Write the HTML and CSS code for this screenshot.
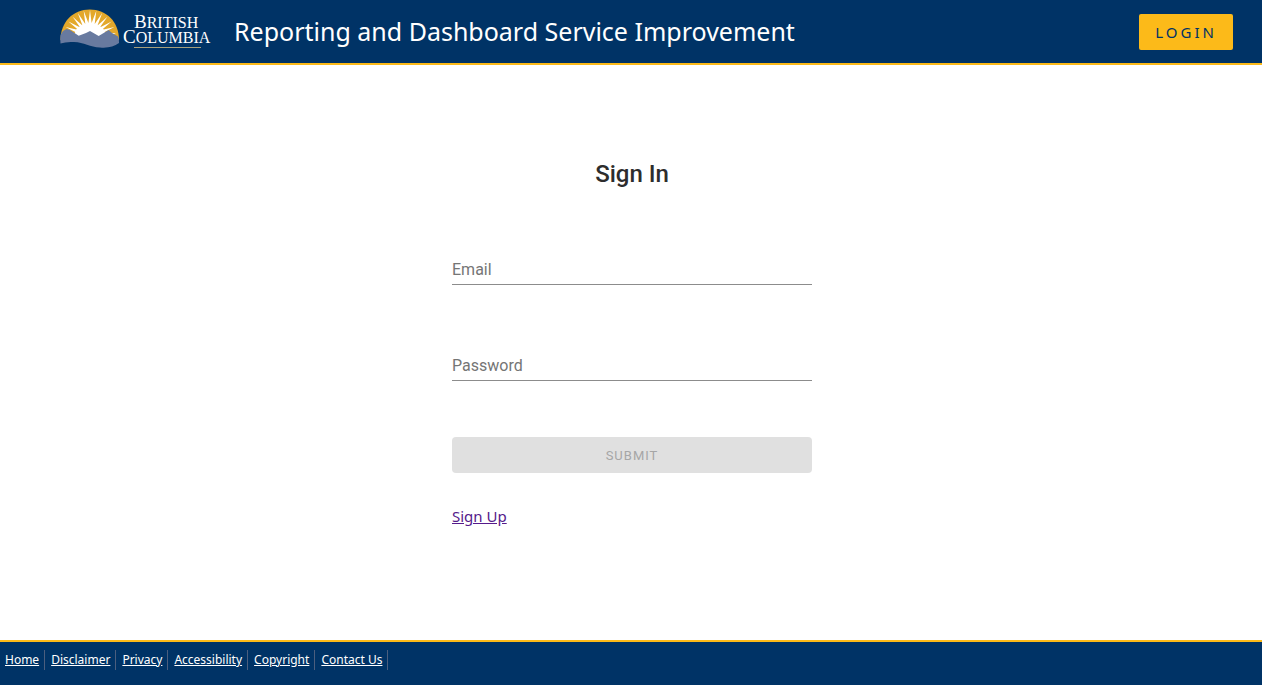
FILE: index.html
```html
<!DOCTYPE html>
<html lang="en">
<head>
<meta charset="utf-8">
<title>Reporting and Dashboard Service Improvement</title>
<link rel="stylesheet" href="styles.css">
</head>
<body>
<header class="header">
  <div class="banner">
    <svg class="logo" viewBox="60 8 152 42" role="img" aria-label="British Columbia">
      <path fill="#e3a82b" d="M60.500 40C60.500 22 73 9.500 89.800 9.500S119 22 119 40Z"/>
      <path fill="#fff" d="M115.900 33.300L102.700 33.100L114.400 27.100L101.600 30.100L111.600 21.500L99.800 27.500L107.400 16.700L97.500 25.400L102.200 13L94.700 23.900L96.300 10.800L91.600 23.100L90 10L88.400 23.100L83.700 10.800L85.300 23.900L77.800 13L82.500 25.400L72.600 16.700L80.200 27.500L68.400 21.500L78.400 30.100L65.600 27.100L77.300 33.100L64.100 33.300L76 38H104Z"/>
      <ellipse fill="#fff" cx="90" cy="33" rx="15" ry="9"/>
      <path fill="#687a9f" d="M60.500 35L63 31L66.500 29L70 30L73 32L78.700 35.700L86 33L90 31L98.700 36L102 34L108.700 30L112 33L118 36.500Q119.500 39 119 43C114 46.500 108 48.300 100 47.500C90 47 84 42.500 74 42Q66 41.500 60.500 43.500Q60 39 60.500 35Z"/>
      <g class="logo-name">
        <text x="134" y="28">B<tspan class="logo-small">RITISH</tspan></text>
        <text x="123" y="43">C<tspan class="logo-small">OLUMBIA</tspan></text>
      </g>
      <path stroke="#a8a17c" d="M134 47.500H201"/>
    </svg>
    <h1 class="title">Reporting and Dashboard Service Improvement</h1>
  </div>
  <button class="login" type="button">LOGIN</button>
</header>
<main class="main">
  <form class="form">
    <h2 class="heading">Sign In</h2>
    <div class="field">
      <label class="label" for="email">Email</label>
      <input class="input" id="email" type="email">
    </div>
    <div class="field">
      <label class="label" for="password">Password</label>
      <input class="input" id="password" type="password">
    </div>
    <button class="submit" type="submit" disabled>SUBMIT</button>
    <a class="signup" href="#signup">Sign Up</a>
  </form>
</main>
<footer class="footer">
  <ul class="links">
    <li class="item"><a class="link" href="#home">Home</a></li>
    <li class="item"><a class="link" href="#disclaimer">Disclaimer</a></li>
    <li class="item"><a class="link" href="#privacy">Privacy</a></li>
    <li class="item"><a class="link" href="#accessibility">Accessibility</a></li>
    <li class="item"><a class="link" href="#copyright">Copyright</a></li>
    <li class="item"><a class="link" href="#contact">Contact Us</a></li>
  </ul>
</footer>
</body>
</html>
```
FILE: styles.css
```css
* { box-sizing: border-box; }
body {
  margin: 0;
  min-height: 100vh;
  display: flex;
  flex-direction: column;
  background: #fff;
  font-family: "Noto Sans", sans-serif;
}
.header {
  display: flex;
  align-items: center;
  justify-content: space-between;
  min-height: 65px;
  padding: 0 29px 0 60px;
  background: #003366;
  border-bottom: 2px solid #fcba19;
}
.banner { display: flex; align-items: center; gap: 22px; }
.logo { width: 152px; height: 42px; margin-bottom: 5px; }
.logo-name { font-family: "Liberation Serif", serif; font-size: 19px; fill: #fff; }
.logo-small { font-size: 16px; }
.title { margin: 0; font-size: 25px; font-weight: 400; color: #fff; padding-bottom: 2px; }
.login {
  height: 36px;
  padding: 0 16px;
  border: 0;
  border-radius: 2px;
  background: #fcba19;
  color: #003366;
  font: 400 15px "Noto Sans", sans-serif;
  letter-spacing: 3px;
}
.main { flex: 1; display: flex; justify-content: center; padding: 92px 24px 0 26px; }
.form { display: flex; flex-direction: column; width: 100%; max-width: 360px; }
.heading {
  margin: 0 0 54px;
  text-align: center;
  font: 500 24px/34px Roboto, sans-serif;
  color: #2d2d2d;
}
.field { display: grid; margin-bottom: 56px; }
.label, .input { grid-area: 1 / 1; font: 400 16px/24px Roboto, sans-serif; }
.label { padding-top: 13px; color: #757575; pointer-events: none; }
.input {
  height: 40px;
  padding: 8px 0 0;
  border: 0;
  border-bottom: 1px solid #8c8c8c;
  background: transparent;
  outline: none;
}
.submit {
  height: 36px;
  border: 0;
  border-radius: 4px;
  background: #e0e0e0;
  color: #a6a6a6;
  font: 400 13px Roboto, sans-serif;
  letter-spacing: 1px;
}
.signup { align-self: flex-start; margin-top: 32px; font-size: 15px; line-height: 22px; color: #551a8b; }
.footer { min-height: 45px; padding-top: 8px; background: #003366; border-top: 2px solid #fcba19; }
.links { display: flex; flex-wrap: wrap; gap: 1px; margin: 0; padding: 0; list-style: none; }
.item { padding: 0 5px; border-right: 1px solid #4b5e7e; line-height: 20px; font-size: 12px; }
.link { color: #fff; }
```
